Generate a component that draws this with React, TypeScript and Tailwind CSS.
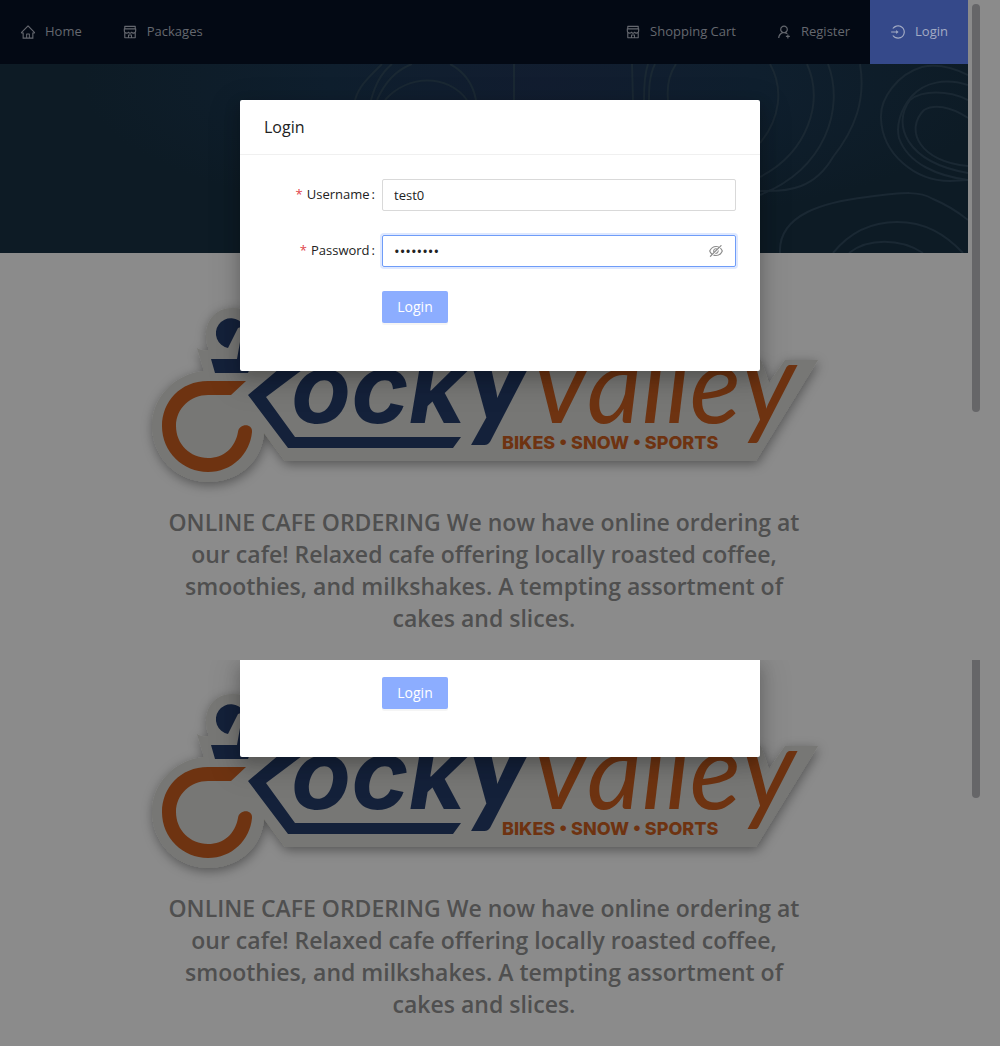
import { useState } from "react";
import {
  AiOutlineEyeInvisible,
  AiOutlineHome,
  AiOutlineLogin,
  AiOutlineShop,
  AiOutlineUserAdd,
} from "react-icons/ai";

const sans = "font-['Open_Sans','Noto_Sans',sans-serif]";

function NavLink({ icon: Icon, label, active = false }: { icon: any; label: string; active?: boolean }) {
  return (
    <a
      href="#"
      className={
        active
          ? "flex h-16 items-center gap-[9px] bg-[#35498a] px-5 text-[#a3abc4]"
          : "flex h-16 items-center gap-[9px] px-5 text-[#65686f]"
      }
    >
      <Icon className="size-4 shrink-0" />
      <span>{label}</span>
    </a>
  );
}

function Header() {
  return (
    <header className="flex h-16 justify-between bg-[#030914] text-[13px]">
      <nav className="flex">
        <NavLink icon={AiOutlineHome} label="Home" />
        <NavLink icon={AiOutlineShop} label="Packages" />
      </nav>
      <nav className="flex">
        <NavLink icon={AiOutlineShop} label="Shopping Cart" />
        <NavLink icon={AiOutlineUserAdd} label="Register" />
        <NavLink icon={AiOutlineLogin} label="Login" active />
      </nav>
    </header>
  );
}

function Banner() {
  return (
    <div className="h-[189px] overflow-hidden bg-[radial-gradient(ellipse_at_56%_10%,#121d30_0%,#0f1f2e_28%,#0d1b25_60%)]">
      <svg
        viewBox="0 0 968 189"
        preserveAspectRatio="xMaxYMin slice"
        className="h-full w-full"
        fill="none"
        stroke="#1a2833"
        strokeWidth="2"
        aria-hidden="true"
      >
        <path d="M355 36C359 22 368 14 382 0M371 36C375 22 380 10 392 0M377 36C384 20 396 6 412 0M385 36C408 10 448 10 467 36M450 0C465 8 473 20 476 36M514 0V36" />
        <path d="M632 0L633 36M648 0C644 12 644 26 644 36M655 0C649 12 649 26 649 36M676 0C668 12 667 26 668 36" />
        <path d="M770 0C784 25 780 55 760 79M807 0C824 38 808 88 760 113M828 0C845 45 825 105 760 131M860 0C866 36 855 65 833 93C815 124 790 128 760 127" />
        <path d="M968 11C950 2 935 0 922 3C898 10 880 34 881 54C882 90 915 117 950 117L968 116" />
        <path d="M968 21C945 14 925 18 912 32C900 46 896 62 899 74C908 100 938 112 968 116" />
        <path d="M968 36C948 26 922 26 910 36C892 60 905 98 968 109M968 54C950 42 934 40 924 46C904 66 920 98 968 102" />
        <path d="M780 189C778 150 825 138 867 133C905 128 920 127 933 135C945 140 958 148 968 156" />
        <path d="M833 189C850 168 872 158 897 158C925 158 945 170 963 189M849 189C868 174 900 174 923 189" />
      </svg>
    </div>
  );
}

function Logo() {
  return (
    <svg viewBox="-6 0 700 210" className="w-full" role="img" aria-label="Rocky Valley Bikes Snow Sports">
      <defs>
        <filter id="plateShadow" x="-10%" y="-10%" width="120%" height="130%">
          <feDropShadow dx="1" dy="3" stdDeviation="6" floodColor="#000" floodOpacity="0.4" />
        </filter>
      </defs>
      <path
        filter="url(#plateShadow)"
        fill="#777774"
        d="M64 81L57 58C60 60 64 61 69 60C60 38 72 18 92 18C106 18 114 24 118 34H300L520 62L531 70H621L629 93L645 70H678L616 171H145L124 143C122 172 98 192 68 192C37 192 12 167 12 136C12 108 34 84 64 81Z"
      />
      <g fill="#14213a">
        <path d="M88 58A15 15 0 1 1 104 36L98 38Z" />
        <path d="M71 69H97L100 52L110 40L124 40L108 83H75Z" />
        <path d="M108 105L152 68H178L126 107L155 147H321L313 158H148Z" />
        <text x="151" y="133" fontSize="98" fontWeight="700" fontStyle="italic" fontFamily="Inter, sans-serif">
          ock
          <tspan fontSize="132" fontWeight="900" fontFamily="Lato, sans-serif">
            y
          </tspan>
        </text>
      </g>
      <g fill="#6e3311">
        <path d="M106 91H68C40 91 22 112 22 136C22 162 43 182 68 182C92 182 110 164 112 142C113 133 99 133 98 142C95 158 84 168 68 168C50 168 36 154 36 136C36 118 51 105 68 105H91Z" />
        <text x="387" y="133" fontSize="107" fontStyle="italic" fontFamily="Lato, sans-serif">
          Valle
          <tspan fontSize="114">y</tspan>
        </text>
        <text x="362" y="159" fontSize="18" fontWeight="800" fontFamily="Inter, sans-serif">
          BIKES • SNOW • SPORTS
        </text>
      </g>
    </svg>
  );
}

function Showcase() {
  return (
    <main className="flex flex-col items-center">
      <div className="w-[700px]">
        <Logo />
      </div>
      <p className="mt-1.5 max-w-[680px] text-center text-[23px] leading-8 font-semibold text-[#4f4f4f]">
        ONLINE CAFE ORDERING We now have online ordering at
        <br />
        our cafe! Relaxed cafe offering locally roasted coffee,
        <br />
        smoothies, and milkshakes. A tempting assortment of
        <br />
        cakes and slices.
      </p>
    </main>
  );
}

function SubmitButton() {
  return (
    <button
      type="submit"
      className="h-8 w-[66px] rounded-xs bg-[#8cadff] text-sm text-white shadow-[0_2px_0_rgba(0,0,0,0.04)]"
    >
      Login
    </button>
  );
}

function FieldLabel({ htmlFor, children }: { htmlFor: string; children: string }) {
  return (
    <label htmlFor={htmlFor} className="w-[118px] shrink-0 pr-[7px] text-right text-[13px] text-[#222]">
      <span className="mr-1 text-[#e0444a]">*</span>
      {children}
      <span className="ml-0.5">:</span>
    </label>
  );
}

const dialogShadow = "shadow-[0_6px_16px_0_rgba(0,0,0,0.22),0_9px_28px_8px_rgba(0,0,0,0.1)]";

function LoginDialog() {
  const [username, setUsername] = useState("test0");
  const [password, setPassword] = useState("password");
  return (
    <div
      role="dialog"
      aria-labelledby="login-title"
      className={`absolute inset-x-0 top-[100px] mx-auto w-[520px] rounded-xs bg-white ${dialogShadow}`}
    >
      <h1 id="login-title" className="border-b border-[#f0f0f0] px-6 py-4 text-base leading-[22px] font-medium text-[#222]">
        Login
      </h1>
      <form className="flex flex-col gap-6 px-6 pt-6 pb-12" onSubmit={(e) => e.preventDefault()}>
        <div className="flex items-center">
          <FieldLabel htmlFor="username">Username</FieldLabel>
          <input
            id="username"
            value={username}
            onChange={(e) => setUsername(e.target.value)}
            className="h-8 min-w-0 flex-1 rounded-xs border border-[#d9d9d9] px-[11px] text-[13px] text-[#222] outline-none"
          />
        </div>
        <div className="flex items-center">
          <FieldLabel htmlFor="password">Password</FieldLabel>
          <div className="flex h-8 min-w-0 flex-1 items-center rounded-xs border border-[#6f9cf8] px-[11px] shadow-[0_0_0_2px_rgba(89,139,255,0.2)]">
            <input
              id="password"
              type="password"
              value={password}
              onChange={(e) => setPassword(e.target.value)}
              className="min-w-0 flex-1 text-[15px] text-[#222] outline-none"
            />
            <button type="button" aria-label="Show password" className="text-[#8c8c8c]">
              <AiOutlineEyeInvisible className="size-4" />
            </button>
          </div>
        </div>
        <div className="pl-[118px]">
          <SubmitButton />
        </div>
      </form>
    </div>
  );
}

export default function App() {
  return (
    <div className={`min-h-screen bg-[#8b8b8b] ${sans}`}>
      <section className="relative h-[660px] overflow-hidden">
        <div className="mr-8">
          <Header />
          <Banner />
          <div className="pt-[37px]">
            <Showcase />
          </div>
        </div>
        <div className="absolute top-1 right-5 h-[408px] w-2 rounded-full bg-[#666668]" />
        <LoginDialog />
      </section>
      <section className="relative h-[386px] overflow-hidden">
        <div className="mr-8 pt-4">
          <Showcase />
        </div>
        <div className="absolute top-0 right-5 h-[138px] w-2 rounded-b-full bg-[#666668]" />
        <div className={`absolute inset-x-0 top-0 mx-auto w-[520px] rounded-b-xs bg-white ${dialogShadow}`}>
          <form className="pt-[17px] pr-6 pb-12 pl-[142px]" onSubmit={(e) => e.preventDefault()}>
            <SubmitButton />
          </form>
        </div>
      </section>
    </div>
  );
}
